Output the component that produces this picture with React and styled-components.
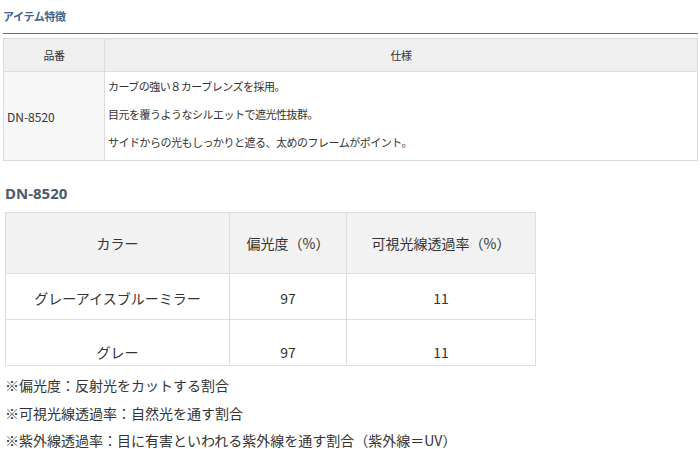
import React from 'react';
import styled, { createGlobalStyle, css } from 'styled-components';

const GlobalStyle = createGlobalStyle`
  body {
    margin: 0;
    background: #fff;
    color: #333;
    font-family: "Noto Sans CJK JP", "Noto Sans", sans-serif;
  }
`;

const Page = styled.div`
  width: 700px;
  box-sizing: border-box;
  padding: 0 2px 0 3px;
`;

const SectionTitle = styled.h2`
  margin: 0;
  box-sizing: border-box;
  height: 34px;
  padding-top: 8px;
  font-size: 11px;
  line-height: 16px;
  font-weight: bold;
  letter-spacing: -0.4px;
  color: #3c6593;
  border-bottom: 1px solid #707070;
`;

const SpecTable = styled.table`
  margin-top: 4px;
  width: 100%;
  border-collapse: collapse;
  font-size: 11px;
  letter-spacing: -0.5px;
  color: #333;

  th,
  td {
    border: 1px solid #dcdcdc;
    padding: 0 3px;
  }
`;

const SpecHead = styled.th`
  height: 32px;
  background: #f0f0f0;
  font-weight: normal;
  text-align: center;
  width: ${props => props.$width || 'auto'};
`;

const CodeCell = styled.td`
  background: #f7f7f7;
  vertical-align: middle;
  text-align: left;
  font-size: 12px;
  letter-spacing: 0;
`;

const SpecCell = styled.td`
  background: #fff;
  vertical-align: top;
  line-height: 28px;
  && {
    padding: 0 3px 4px;
  }
`;

const ModelTitle = styled.h3`
  margin: 22px 0 9px 2px;
  font-family: "Noto Sans", "Noto Sans CJK JP", sans-serif;
  font-size: 15px;
  line-height: 20px;
  font-weight: bold;
  color: #4d5a69;
`;

const ColorTable = styled.table`
  margin-left: 2px;
  width: 527px;
  border-collapse: collapse;
  font-size: 14px;
  color: #333;
  table-layout: fixed;

  th,
  td {
    border: 1px solid #dedede;
    text-align: center;
  }
`;

const ColorHead = styled.th`
  height: 60px;
  padding: 0;
  background: #f2f2f2;
  font-weight: normal;
  vertical-align: middle;
  width: ${props => props.$width};
`;

const ColorCell = styled.td`
  height: 46px;
  box-sizing: border-box;
  line-height: 20px;
  vertical-align: top;
  padding: 0;
  ${props =>
    props.$low
      ? css`
          padding-top: 22px;
        `
      : css`
          padding-top: 14px;
        `};
`;

const Notes = styled.div`
  margin-top: 6px;
  padding-left: 2px;
  font-size: 14px;
  line-height: 27.5px;
  color: #333;
`;

const specs = [
  'カーブの強い８カーブレンズを採用。',
  '目元を覆うようなシルエットで遮光性抜群。',
  'サイドからの光もしっかりと遮る、太めのフレームがポイント。'
];

const colors = [
  { name: 'グレーアイスブルーミラー', polar: 97, visible: 11 },
  { name: 'グレー', polar: 97, visible: 11, low: true }
];

const notes = [
  '※偏光度：反射光をカットする割合',
  '※可視光線透過率：自然光を通す割合',
  '※紫外線透過率：目に有害といわれる紫外線を通す割合（紫外線＝UV）'
];

export default function App() {
  return (
    <Page>
      <GlobalStyle />
      <SectionTitle>アイテム特徴</SectionTitle>
      <SpecTable>
        <thead>
          <tr>
            <SpecHead $width="94px">品番</SpecHead>
            <SpecHead>仕様</SpecHead>
          </tr>
        </thead>
        <tbody>
          <tr>
            <CodeCell>DN-8520</CodeCell>
            <SpecCell>
              {specs.map(line => (
                <div key={line}>{line}</div>
              ))}
            </SpecCell>
          </tr>
        </tbody>
      </SpecTable>

      <ModelTitle>DN-8520</ModelTitle>
      <ColorTable>
        <thead>
          <tr>
            <ColorHead $width="223px">カラー</ColorHead>
            <ColorHead $width="116px">偏光度（%）</ColorHead>
            <ColorHead $width="188px">可視光線透過率（%）</ColorHead>
          </tr>
        </thead>
        <tbody>
          {colors.map(c => (
            <tr key={c.name}>
              <ColorCell $low={c.low}>{c.name}</ColorCell>
              <ColorCell $low={c.low}>{c.polar}</ColorCell>
              <ColorCell $low={c.low}>{c.visible}</ColorCell>
            </tr>
          ))}
        </tbody>
      </ColorTable>

      <Notes>
        {notes.map(n => (
          <div key={n}>{n}</div>
        ))}
      </Notes>
    </Page>
  );
}
